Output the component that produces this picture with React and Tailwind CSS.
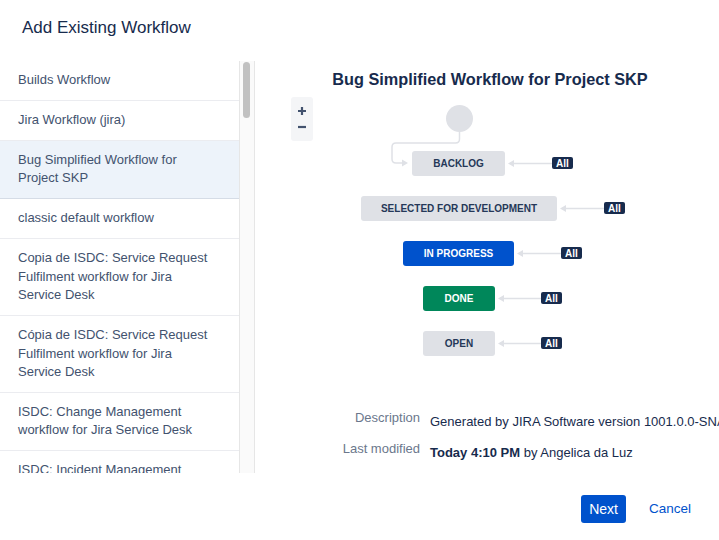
const WORKFLOWS = [
  { name: "Builds Workflow" },
  { name: "Jira Workflow (jira)" },
  { name: "Bug Simplified Workflow for Project SKP", selected: true },
  { name: "classic default workflow" },
  { name: "Copia de ISDC: Service Request Fulfilment workflow for Jira Service Desk" },
  { name: "Cópia de ISDC: Service Request Fulfilment workflow for Jira Service Desk" },
  { name: "ISDC: Change Management workflow for Jira Service Desk" },
  { name: "ISDC: Incident Management workflow for Jira Service Desk" },
];

// diagram coordinates are relative to the canvas box
const STATUSES = [
  { label: "BACKLOG", left: 157, top: 62, width: 93, badge: 297, cls: "bg-[#dfe1e6] text-[#253858]" },
  { label: "SELECTED FOR DEVELOPMENT", left: 106, top: 107, width: 196, badge: 349, cls: "bg-[#dfe1e6] text-[#253858]" },
  { label: "IN PROGRESS", left: 148, top: 152, width: 111, badge: 306, cls: "bg-[#0052cc] text-white" },
  { label: "DONE", left: 168, top: 197, width: 72, badge: 286, cls: "bg-[#00875a] text-white" },
  { label: "OPEN", left: 168, top: 242, width: 72, badge: 286, cls: "bg-[#dfe1e6] text-[#253858]" },
];

const Diagram = () => {
  return (
    <div className="relative h-[320px] w-full">
      <div className="absolute left-[36px] top-[8px] flex h-[44px] w-[22px] flex-col items-center justify-center gap-[6px] rounded-[3px] bg-[#f4f5f7]">
        <svg width="10" height="10" viewBox="0 0 10 10">
          <path d="M5 1v8M1 5h8" stroke="#42526e" strokeWidth="2.2" />
        </svg>
        <svg width="10" height="10" viewBox="0 0 10 10">
          <path d="M1 5h8" stroke="#42526e" strokeWidth="2.2" />
        </svg>
      </div>

      <svg className="absolute left-0 top-0" width="464" height="320">
        <path
          d="M204.5 43V50Q204.5 54 200.5 54H141Q137 54 137 58V70Q137 74 141 74H148"
          fill="none"
          stroke="#dfe1e6"
          strokeWidth="1.5"
        />
        <polygon points="147,70.5 153,74 147,77.5" fill="#dfe1e6" />
        {STATUSES.map((s) => {
          const y = s.top + 12.5;
          const tip = s.left + s.width + 3;
          return (
            <g key={s.label}>
              <line x1={tip + 5} y1={y} x2={s.badge} y2={y} stroke="#dfe1e6" strokeWidth="1.5" />
              <polygon points={`${tip},${y} ${tip + 6},${y - 3.5} ${tip + 6},${y + 3.5}`} fill="#dfe1e6" />
            </g>
          );
        })}
      </svg>

      <div className="absolute left-[191px] top-[16px] h-[27px] w-[27px] rounded-full bg-[#dfe1e6]" />

      {STATUSES.map((s) => (
        <div key={s.label}>
          <div
            className={`absolute flex h-[25px] items-center justify-center rounded-[3px] text-[10px] font-bold ${s.cls}`}
            style={{ left: s.left, top: s.top, width: s.width }}
          >
            {s.label}
          </div>
          <div
            className="absolute flex h-[12px] w-[21px] items-center justify-center rounded-[2px] bg-[#172b4d] text-[10px] font-bold text-white"
            style={{ left: s.badge, top: s.top + 6 }}
          >
            All
          </div>
        </div>
      ))}
    </div>
  );
};

const App = () => {
  return (
    <div className="h-[540px] w-[719px] overflow-hidden bg-white font-['Liberation_Sans',Arial,sans-serif]">
      <div className="h-[61px] pl-[22px] pt-[18px]">
        <h1 className="text-[17px] leading-[20px] text-[#172b4d]">Add Existing Workflow</h1>
      </div>

      <div className="flex h-[412px]">
        <div className="w-[239px] overflow-hidden">
          {WORKFLOWS.map((w) => (
            <div
              key={w.name}
              className={
                w.selected
                  ? "border-b border-[#d5dce6] bg-[#edf3fa] pb-[10.6px] pl-[18px] pr-[26px] pt-[10px] text-[13px] leading-[18.4px] text-[#42526e]"
                  : "border-b border-[#ebecf0] pb-[10.6px] pl-[18px] pr-[26px] pt-[10px] text-[13px] leading-[18.4px] text-[#42526e]"
              }
            >
              {w.name}
            </div>
          ))}
        </div>
        <div className="relative w-[16px] border-l border-r border-[#e6e6e6] bg-[#fafafa]">
          <div className="absolute left-[3px] top-[1px] h-[56px] w-[7px] rounded-full bg-[#c1c1c1]" />
        </div>

        <div className="flex-1 overflow-hidden">
          <h2 className="pl-[6px] pt-[8px] text-center text-[16.3px] font-bold leading-[20px] text-[#172b4d]">
            Bug Simplified Workflow for Project SKP
          </h2>
          <Diagram />
          <div className="grid grid-cols-[165px_1fr] gap-x-[10px] gap-y-[9px] text-[13px] leading-[18px]">
            <div className="text-right text-[#6b778c]">Description</div>
            <div className="whitespace-nowrap pt-[4px] text-[#172b4d]">
              Generated by JIRA Software version 1001.0.0-SNAPSHOT. This workflow is managed internally by Jira Software.
            </div>
            <div className="text-right text-[#6b778c]">Last modified</div>
            <div className="whitespace-nowrap pt-[4px] text-[#172b4d]">
              <span className="font-bold">Today 4:10 PM</span> by Angelica da Luz
            </div>
          </div>
        </div>
      </div>

      <div className="flex h-[67px] items-start justify-end gap-[13px] pr-[18px] pt-[22px]">
        <button className="h-[28px] rounded-[3px] bg-[#0052cc] px-[8px] text-[14px] font-medium text-white">
          Next
        </button>
        <button className="h-[28px] px-[10px] text-[13.5px] text-[#0052cc]">Cancel</button>
      </div>
    </div>
  );
};

export default App;
